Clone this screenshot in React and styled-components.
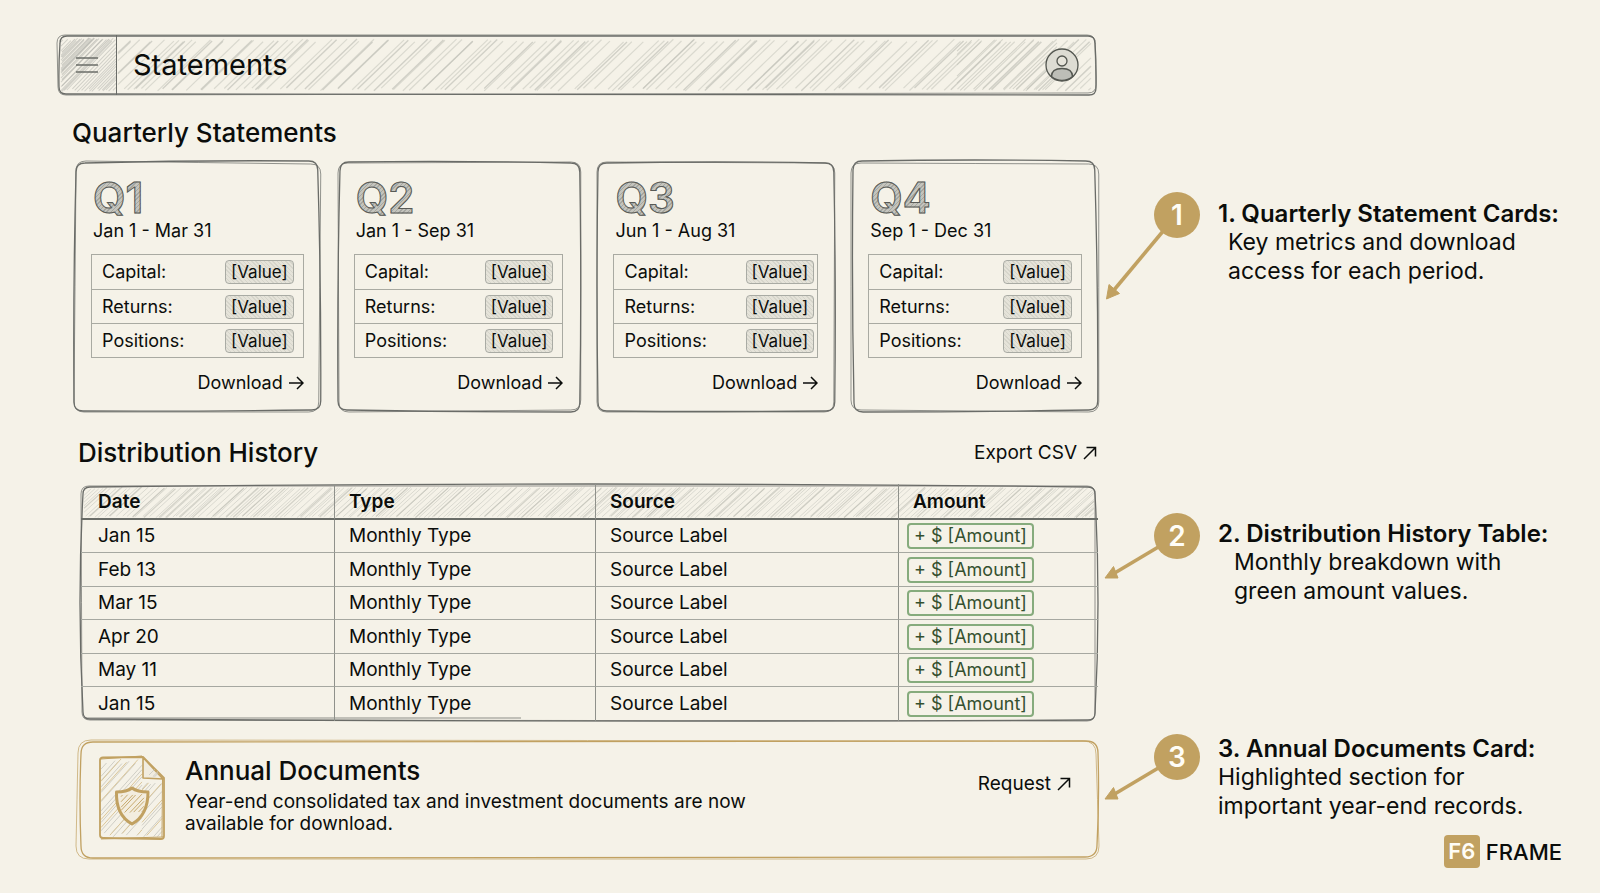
import React from "react";
import styled, { createGlobalStyle } from "styled-components";

const ink = "#0b0d0b";
const pencil = "#6a6c68";
const gold = "#c1a161";

const quarters = [
  { name: "Q1", period: "Jan 1 - Mar 31", inset: 9 },
  { name: "Q2", period: "Jan 1 - Sep 31", inset: 9 },
  { name: "Q3", period: "Jun 1 - Aug 31", inset: 3 },
  { name: "Q4", period: "Sep 1 - Dec 31", inset: 9 },
];
const metrics = ["Capital:", "Returns:", "Positions:"];
const dates = ["Jan 15", "Feb 13", "Mar 15", "Apr 20", "May 11", "Jan 15"];

// corner offsets of the two pencil passes, clockwise from the top left
const cardStrokes = [
  [
    [1, 2, -3, 0, 0, -2, -1, -1],
    [1, 0, 0, 3, -2, 0, -1, 0],
  ],
  [
    [2, 1, -1, 2, -1, 0, 0, -2],
    [0, 2, 0, 1, 0, -2, 1, 0],
  ],
  [
    [1, 2, -1, 2, 0, -1, 1, -1],
    [0, 1, 0, 2, -1, 0, 0, 0],
  ],
  [
    [1, 0, -4, 0, -1, -2, 2, 0],
    [-1, 2, 0, 3, 0, 0, -1, -2],
  ],
];

function outline(w, h, c, r, bow) {
  const [ax, ay, bx, by, cx, cy, dx, dy] = c;
  const tr = w + bx;
  const br = w + cx;
  const b = h + cy;
  const bl = h + dy;
  return [
    `M${ax + r} ${ay}`,
    `Q${w / 2} ${(ay + by) / 2 - bow} ${tr - r} ${by}`,
    `Q${tr} ${by} ${tr} ${by + r}`,
    `Q${(tr + br) / 2 + bow} ${h / 2} ${br} ${b - r}`,
    `Q${br} ${b} ${br - r} ${b}`,
    `Q${w / 2} ${(b + bl) / 2 + bow / 2} ${dx + r} ${bl}`,
    `Q${dx} ${bl} ${dx} ${bl - r}`,
    `Q${(ax + dx) / 2 - bow} ${h / 2} ${ax} ${ay + r}`,
    `Q${ax} ${ay} ${ax + r} ${ay}Z`,
  ].join("");
}

// slanted pencil strokes with a slightly irregular rhythm, cut at the box edges
function hatch(x0, x1, y0, y1, step, slant, seed) {
  let s = seed * 7919;
  const rnd = () => {
    s = (s * 16807) % 2147483647;
    return s / 2147483647;
  };
  const k = (y1 - y0) / slant;
  let d = "";
  for (let x = x0 - slant; x < x1; x += step * (0.4 + rnd() * 1.2)) {
    let ax = x + slant * 0.06 * rnd();
    let bx = x + slant * (1 - 0.06 * rnd());
    let ay = y1 - (ax - x) * k;
    let by = y1 - (bx - x) * k;
    if (ax < x0) {
      ay -= (x0 - ax) * k;
      ax = x0;
    }
    if (bx > x1) {
      by += (bx - x1) * k;
      bx = x1;
    }
    if (ay > by && bx > ax) {
      d += `M${ax.toFixed(1)} ${ay.toFixed(1)}L${bx.toFixed(1)} ${by.toFixed(1)}`;
    }
  }
  return d;
}

function Frame({ w, h, strokes, r = 9, color = pencil, bow = 2, children }) {
  return (
    <FrameSvg viewBox={`0 0 ${w} ${h}`} preserveAspectRatio="none" aria-hidden="true">
      {children}
      {strokes.map((c, i) => (
        <path
          key={i}
          d={outline(w, h, c, r + i, i ? 0 : bow)}
          stroke={color}
          strokeWidth={i ? 0.9 : 1.3}
          opacity={i ? 0.8 : 1}
        />
      ))}
    </FrameSvg>
  );
}

function Arrow({ up }) {
  return (
    <ArrowSvg viewBox="0 0 16 16" aria-hidden="true">
      <path d={up ? "M2 14L13.5 2.5M4.5 2.5H13.5V11.5" : "M1 8H15M9 2L15 8L9 14"} />
    </ArrowSvg>
  );
}

function QuarterCard({ quarter, strokes }) {
  return (
    <Card>
      <Frame w={246} h={250} strokes={strokes} />
      <QuarterName>{quarter.name}</QuarterName>
      <Period>{quarter.period}</Period>
      <Metrics>
        {metrics.map((label) => (
          <Metric key={label} $inset={quarter.inset}>
            <dt>{label}</dt>
            <dd>[Value]</dd>
          </Metric>
        ))}
      </Metrics>
      <CardFooter>
        <TextLink href="#download">
          Download
          <Arrow />
        </TextLink>
      </CardFooter>
    </Card>
  );
}

function Note({ number, title, lines, indent, lift, steep }) {
  return (
    <NoteRow>
      <PointerSvg viewBox="0 0 96 112">
        {steep ? (
          <g>
            <path d="M60 38L10 98" stroke={gold} strokeWidth="3.6" />
            <path d="M2.5 107L5 92.5L15.5 101.5Z" />
          </g>
        ) : (
          <g>
            <path d="M56 33L9 61" stroke={gold} strokeWidth="3.6" />
            <path d="M1 65L9.5 53.5L14 65Z" />
          </g>
        )}
        <circle cx="73" cy="23" r="23" stroke="none" />
        <text x="73" y="33" textAnchor="middle">
          {number}
        </text>
      </PointerSvg>
      <NoteText $lift={lift} $indent={indent}>
        <h3>{`${number}. ${title}:`}</h3>
        <p>
          {lines[0]}
          <br />
          {lines[1]}
        </p>
      </NoteText>
    </NoteRow>
  );
}

function DocIcon() {
  return (
    <DocSvg viewBox="0 0 68 86" aria-hidden="true">
      <path d={hatch(3, 44, 4, 82, 7, 70, 9)} stroke="#cfcec6" strokeWidth="1" />
      <path d={hatch(44, 64, 26, 82, 7, 50, 29)} stroke="#cfcec6" strokeWidth="1" />
      <path d={hatch(3, 44, 4, 82, 13, 70, 61)} stroke="#dbc79b" strokeWidth="1" />
      <path d={hatch(44, 64, 26, 82, 13, 50, 88)} stroke="#dbc79b" strokeWidth="1" />
      <path d="M5 2.5L45 2L66 23V81Q66 84 63 84L5 83Q2 83 2 80V5Q2 2.5 5 2.5Z" strokeWidth="1.8" />
      <path d="M3 4L44 1M64.5 24L64 82M3 84L30 83L65 82" strokeWidth="1" />
      <path d="M45 2.5V23L65 24Z" fill="#f1ecdf" strokeWidth="1.6" />
      <path d={hatch(51, 60, 14, 22, 4, 8, 3)} stroke="#cfcec6" strokeWidth="1" />
      <path
        d="M34 33C30 36 24 37 18.500 37C18 52 23 63 34 69C45 63 50 52 50 37C44 37 38 36 34 33Z"
        fill="#f3eddf"
        strokeWidth="3"
      />
      <path d={hatch(23, 46, 39, 58, 4, 18, 5)} strokeWidth="0.9" />
    </DocSvg>
  );
}

export default function App() {
  return (
    <>
      <GlobalStyle />
      <Page>
        <Header>
          <Frame
            w={1039}
            h={59}
            r={7}
            bow={1}
            strokes={[
              [3, 1, -1, 1, 0, 0, 2, -1],
              [0, 0, -1, 0, 0, -2, 1, 0],
            ]}
          >
            <path d={hatch(4, 59, 3, 56, 3, 52, 77)} stroke="#c2c2ba" strokeWidth="1" opacity="0.7" />
            <path d="M5 50L52 4M5 44L46 4M5 39L40 4M5 35L37 3M5 30L32 3M5 26L27 4M5 22L23 4M5 17L18 4" stroke="#b0b1aa" strokeWidth="1.2" opacity="0.6" />
            <path d={hatch(61, 1034, 4, 55, 10, 54, 1234)} stroke="#cfcec5" strokeWidth="1.2" opacity="0.7" />
            <path d={hatch(61, 1034, 4, 55, 27, 54, 91)} stroke="#c2c2b9" strokeWidth="1.4" opacity="0.7" />
            <path d={hatch(900, 1000, 4, 55, 8, 54, 321)} stroke="#c4c4bb" strokeWidth="1" opacity="0.7" />
          </Frame>
          <MenuButton aria-label="Menu">
            <svg width="24" height="18" viewBox="0 0 24 18">
              <path d="M1 2H23M1 9H23M1 16H23" />
            </svg>
          </MenuButton>
          <h1>Statements</h1>
          <AvatarButton aria-label="Account">
            <svg width="34" height="34" viewBox="0 0 34 34">
              <circle cx="17" cy="17" r="16" fill="#dddcd3" />
              <path d="M6.5 28.5C6.5 23.5 10 20.5 17 20.5S27.5 23.5 27.5 28.5A16 16 0 0 1 6.5 28.5Z" fill="#bdbeb7" />
              <circle cx="17" cy="13" r="5" fill="#e6e4da" />
            </svg>
          </AvatarButton>
        </Header>

        <QuarterSection>
          <h2>Quarterly Statements</h2>
          <Cards>
            {quarters.map((q, i) => (
              <QuarterCard key={q.name} quarter={q} strokes={cardStrokes[i]} />
            ))}
          </Cards>
        </QuarterSection>
        <Aside $top={97}>
          <Note
            number={1}
            title="Quarterly Statement Cards"
            lines={["Key metrics and download", "access for each period."]}
            indent={10}
            lift={7}
            steep
          />
        </Aside>

        <HistorySection>
          <SectionHead>
            <h2>Distribution History</h2>
            <TextLink href="#export">
              Export CSV
              <Arrow up />
            </TextLink>
          </SectionHead>
          <TableWrap>
            <Frame
              w={1017}
              h={238}
              r={7}
              bow={6}
              strokes={[
                [2, 3, -3, 3, -3, -1, 2, -2],
                [0, 2, -3, 2, -3, 0, 1, -1],
              ]}
            >
              <path d={hatch(3, 1013, 3, 34, 5, 34, 555)} stroke="#cfcec5" strokeWidth="1" opacity="0.7" />
              <path d={hatch(3, 1013, 3, 34, 17, 34, 42)} stroke="#bcbcb3" strokeWidth="1.2" opacity="0.6" />
              <path d="M4 235L440 235" stroke="#8d8f89" strokeWidth="1" />
            </Frame>
            <Table>
              <thead>
                <tr>
                  <th>Date</th>
                  <th>Type</th>
                  <th>Source</th>
                  <th>Amount</th>
                </tr>
              </thead>
              <tbody>
                {dates.map((date, i) => (
                  <tr key={i}>
                    <td>{date}</td>
                    <td>Monthly Type</td>
                    <td>Source Label</td>
                    <td>
                      <Amount>+ $ [Amount]</Amount>
                    </td>
                  </tr>
                ))}
              </tbody>
            </Table>
          </TableWrap>
        </HistorySection>
        <Aside $top={101}>
          <Note
            number={2}
            title="Distribution History Table"
            lines={["Monthly breakdown with", "green amount values."]}
            indent={16}
            lift={6}
          />
        </Aside>

        <AnnualCard>
          <Frame
            w={1022}
            h={120}
            r={12}
            bow={2}
            color={gold}
            strokes={[
              [4, 3, -1, 2, -2, -2, 4, -1],
              [1, 1, -3, 2, 0, 0, -1, 0],
            ]}
          />
          <DocIcon />
          <AnnualText>
            <h2>Annual Documents</h2>
            <p>
              Year-end consolidated tax and investment documents are now
              <br />
              available for download.
            </p>
          </AnnualText>
          <TextLink href="#request">
            Request
            <Arrow up />
          </TextLink>
        </AnnualCard>
        <Aside $top={13}>
          <Note
            number={3}
            title="Annual Documents Card"
            lines={["Highlighted section for", "important year-end records."]}
            indent={0}
            lift={0}
          />
          <Brand>
            <span>F6</span>
            FRAME
          </Brand>
        </Aside>
      </Page>
    </>
  );
}

const GlobalStyle = createGlobalStyle`
  * {
    box-sizing: border-box;
  }
  body {
    margin: 0;
    background: #f5f2e8;
    color: ${ink};
    font-family: Inter, "Liberation Sans", sans-serif;
    font-size: 19px;
    line-height: 22px;
  }
  h1, h2, h3, p, dl, dd {
    margin: 0;
  }
  h2 {
    font-size: 26px;
    font-weight: 500;
    line-height: 32px;
  }
  button {
    border: 0;
    background: none;
    cursor: pointer;
  }
`;

const Page = styled.div`
  display: grid;
  grid-template-columns: minmax(0, 1042fr) minmax(0, 464fr);
  column-gap: 5px;
  padding: 35px 32px 32px 57px;
`;

const FrameSvg = styled.svg`
  position: absolute;
  inset: 0;
  z-index: -1;
  width: 100%;
  height: 100%;
  overflow: visible;
  fill: none;
`;

const ArrowSvg = styled.svg`
  width: 16px;
  height: 16px;
  fill: none;
  stroke: currentColor;
  stroke-width: 1.5;
`;

const Header = styled.header`
  position: relative;
  z-index: 0;
  display: flex;
  align-items: center;
  height: 60px;
  margin-right: 3px;
  grid-column: 1;

  h1 {
    flex: 1;
    padding-left: 16px;
    font-size: 29px;
    font-weight: 400;
    line-height: 36px;
  }
`;

const MenuButton = styled.button`
  align-self: stretch;
  display: grid;
  place-items: center;
  width: 60px;
  padding: 0;
  border-right: 1px solid ${pencil};

  svg {
    stroke: #6b6d68;
    stroke-width: 1.6;
  }
`;

const AvatarButton = styled.button`
  display: flex;
  padding: 0;
  margin-right: 17px;

  svg {
    fill: none;
    stroke: #52554f;
    stroke-width: 1.3;
  }
`;

const QuarterSection = styled.section`
  grid-column: 1;
  padding: 22px 0 0 15px;
`;

const Cards = styled.div`
  display: grid;
  grid-template-columns: 246fr 243fr 238fr 247fr;
  gap: 17px;
  padding: 12px 0 0 3px;
`;

const Card = styled.article`
  position: relative;
  z-index: 0;
  padding: 15px 17px 18px 16px;
  font-size: 18px;
`;

const QuarterName = styled.div`
  width: max-content;
  padding-left: 2px;
  font-size: 42px;
  font-weight: 600;
  line-height: 44px;
  color: transparent;
  background: repeating-linear-gradient(135deg, #a6a7a2 0 1px, #c4c4bd 1px 3px);
  background-clip: text;
  -webkit-background-clip: text;
  -webkit-text-stroke: 1px #585a56;
`;

const Period = styled.div`
  padding-left: 2px;
`;

const Metrics = styled.dl`
  margin-top: 12px;
  border: 1px solid #a9aaa2;
`;

const Metric = styled.div`
  display: flex;
  align-items: center;
  justify-content: space-between;
  height: 34px;
  padding: 0 ${(p) => p.$inset}px 0 10px;

  & + & {
    border-top: 1px solid #a9aaa2;
  }

  dd {
    padding: 0 5px;
    border: 1px solid #a9aba4;
    border-radius: 4px;
    background: repeating-linear-gradient(45deg, #d6d5cb 0 1px, #e5e3d9 1px 3px);
    font-size: 17px;
  }
`;

const CardFooter = styled.div`
  display: flex;
  justify-content: flex-end;
  margin-top: 14px;
`;

const TextLink = styled.a`
  display: inline-flex;
  align-items: center;
  gap: 5px;
  color: inherit;
  text-decoration: none;
`;

const HistorySection = styled.section`
  grid-column: 1;
  padding: 25px 1px 0 21px;
`;

const SectionHead = styled.div`
  display: flex;
  align-items: center;
  justify-content: space-between;
`;

const TableWrap = styled.div`
  position: relative;
  z-index: 0;
  margin: 15px 0 0 3px;
`;

const Table = styled.table`
  width: 100%;
  table-layout: fixed;
  border-collapse: separate;
  border-spacing: 0;

  th,
  td {
    height: 33px;
    padding: 0 0 0 14px;
    border-bottom: 1px solid #a6a8a1;
    text-align: left;
  }
  th {
    height: 36px;
    padding-top: 2px;
    border-bottom: 2px solid #6a6d68;
    font-weight: 600;
  }
  tbody tr:nth-child(even) td {
    height: 34px;
  }
  tbody tr:last-child td {
    border-bottom: 0;
  }
  th:first-child,
  td:first-child {
    width: 254px;
    padding-left: 17px;
  }
  th:nth-child(2) {
    width: 261px;
  }
  th:last-child {
    width: 199px;
  }
  th:not(:last-child),
  td:not(:last-child) {
    border-right: 1px solid #8f918b;
  }
  td:last-child {
    padding-left: 8px;
  }
`;

const Amount = styled.span`
  display: block;
  width: max-content;
  padding: 0 5px;
  border: 2px solid #86ab7d;
  border-radius: 4px;
  color: #34502f;
  font-size: 18px;
`;

const AnnualCard = styled.section`
  position: relative;
  z-index: 0;
  grid-column: 1;
  display: flex;
  align-items: flex-start;
  height: 120px;
  margin: 18px 0 0 20px;
  padding: 16px 27px 0 21px;

  ${TextLink} {
    margin-top: 18px;
  }
`;

const DocSvg = styled.svg`
  flex: none;
  width: 68px;
  height: 86px;
  fill: none;
  stroke: ${gold};
  stroke-linejoin: round;
`;

const AnnualText = styled.div`
  flex: 1;
  padding-left: 19px;

  p {
    padding-top: 4px;
  }
`;

const Aside = styled.aside`
  grid-column: 2;
  display: flex;
  flex-direction: column;
  justify-content: space-between;
  padding-top: ${(p) => p.$top}px;
`;

const NoteRow = styled.div`
  display: flex;
  align-items: flex-start;
  gap: 18px;
  height: 100px;
`;

const PointerSvg = styled.svg`
  flex: none;
  width: 96px;
  height: 112px;
  fill: ${gold};
  stroke: ${gold};
  stroke-linejoin: round;

  text {
    fill: #fffdf6;
    stroke: none;
    font-size: 28px;
    font-weight: 600;
  }
`;

const NoteText = styled.div`
  padding-top: ${(p) => p.$lift}px;
  font-size: 23px;
  line-height: 29px;
  white-space: nowrap;

  h3 {
    font-size: 24px;
    font-weight: 600;
  }
  p {
    padding-left: ${(p) => p.$indent}px;
  }
`;

const Brand = styled.div`
  display: flex;
  align-items: center;
  align-self: flex-end;
  gap: 6px;
  margin: 0 6px -9px 0;
  font-size: 22px;
  font-weight: 500;

  span {
    width: 36px;
    border-radius: 4px;
    background: ${gold};
    color: #fffdf6;
    font-weight: 600;
    line-height: 33px;
    text-align: center;
  }
`;
